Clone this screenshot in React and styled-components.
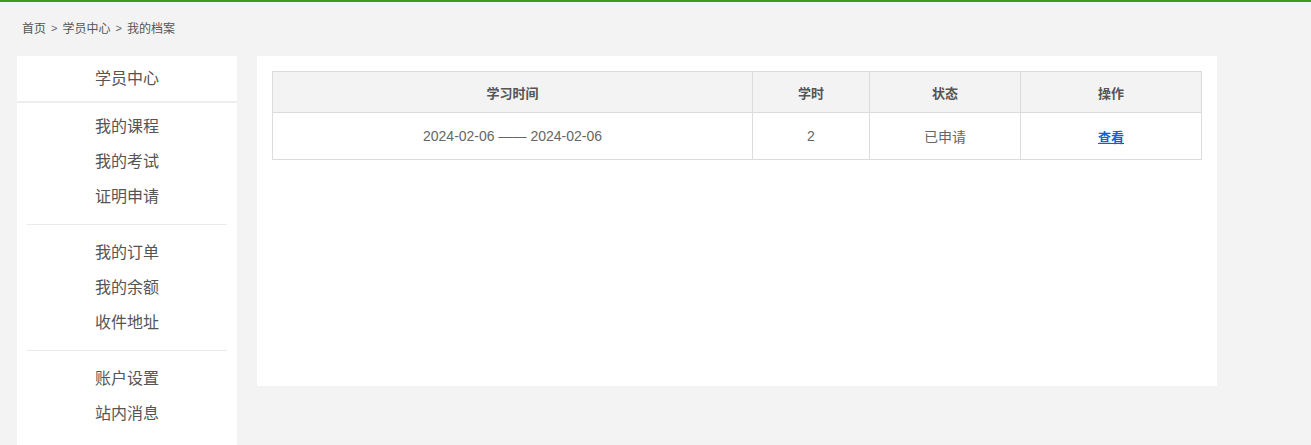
import React from "react";
import styled, { createGlobalStyle } from "styled-components";

const Global = createGlobalStyle`
  html, body { margin: 0; padding: 0; }
  body {
    background: #f3f3f3;
    font-family: "Liberation Sans", Arial, "Noto Sans CJK SC", sans-serif;
    color: #555;
  }
`;

const Page = styled.div`
  border-top: 2px solid #3a9d1a;
  min-height: 443px;
`;

const Wrap = styled.div`
  width: 1200px;
  padding-left: 17px;
`;

const Crumbs = styled.div`
  display: flex;
  align-items: center;
  height: 51px;
  padding-bottom: 3px;
  padding-left: 5px;
  font-size: 12px;
  color: #555;
  gap: 5px;
`;

const Sep = styled.span`
  font-size: 11px;
  color: #666;
`;

const Body = styled.div`
  display: flex;
  align-items: flex-start;
  gap: 20px;
`;

const Side = styled.div`
  width: 220px;
  background: #fff;
  min-height: 389px;
`;

const SideHead = styled.div`
  height: 45px;
  line-height: 45px;
  text-align: center;
  font-size: 16px;
  color: #555;
  border-bottom: 2px solid #eeeeee;
`;

const Group = styled.div`
  padding: ${(p) => p.$top}px 0 ${(p) => p.$bottom}px;
  border-top: ${(p) => (p.$line ? "1px solid #ebebeb" : "none")};
  margin: 0 10px;
`;

const Item = styled.div`
  height: 35px;
  line-height: 35px;
  text-align: center;
  font-size: 16px;
  color: #555;
`;

const Main = styled.div`
  width: 930px;
  height: 300px;
  background: #fff;
  padding: 15px;
`;

const Table = styled.table`
  width: 929px;
  border-collapse: collapse;
  table-layout: fixed;
  font-size: 14px;
`;

const Th = styled.th`
  height: 40px;
  background: #f3f3f3;
  border: 1px solid #dcdcdc;
  font-size: 13px;
  font-weight: bold;
  color: #555;
  text-align: center;
  padding: 0;
`;

const Td = styled.td`
  height: 46px;
  border: 1px solid #dcdcdc;
  text-align: center;
  color: #666;
  padding: 0;
`;

const Link = styled.a`
  color: #0066dd;
  font-weight: bold;
  font-size: 13px;
  text-decoration: underline;
  cursor: pointer;
`;

const groups = [
  { top: 6, bottom: 10, line: false, items: ["我的课程", "我的考试", "证明申请"] },
  { top: 10, bottom: 10, line: true, items: ["我的订单", "我的余额", "收件地址"] },
  { top: 10, bottom: 10, line: true, items: ["账户设置", "站内消息"] },
];

export default function App() {
  return (
    <>
      <Global />
      <Page>
        <Wrap>
          <Crumbs>
            <span>首页</span>
            <Sep>&gt;</Sep>
            <span>学员中心</span>
            <Sep>&gt;</Sep>
            <span>我的档案</span>
          </Crumbs>
          <Body>
            <Side>
              <SideHead>学员中心</SideHead>
              {groups.map((g, i) => (
                <Group key={i} $top={g.top} $bottom={g.bottom} $line={g.line}>
                  {g.items.map((t) => (
                    <Item key={t}>{t}</Item>
                  ))}
                </Group>
              ))}
            </Side>
            <Main>
              <Table>
                <colgroup>
                  <col style={{ width: 480 }} />
                  <col style={{ width: 117 }} />
                  <col style={{ width: 151 }} />
                  <col style={{ width: 181 }} />
                </colgroup>
                <thead>
                  <tr>
                    <Th>学习时间</Th>
                    <Th>学时</Th>
                    <Th>状态</Th>
                    <Th>操作</Th>
                  </tr>
                </thead>
                <tbody>
                  <tr>
                    <Td>2024-02-06 —— 2024-02-06</Td>
                    <Td>2</Td>
                    <Td>已申请</Td>
                    <Td>
                      <Link>查看</Link>
                    </Td>
                  </tr>
                </tbody>
              </Table>
            </Main>
          </Body>
        </Wrap>
      </Page>
    </>
  );
}
